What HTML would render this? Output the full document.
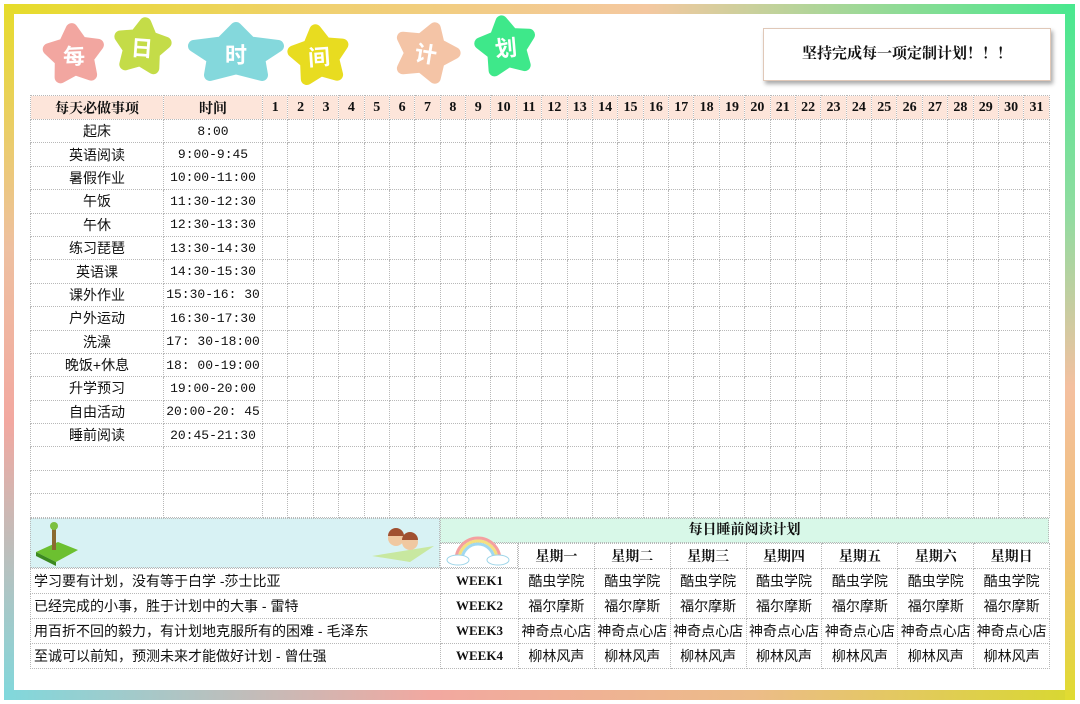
<!DOCTYPE html>
<html><head><meta charset="utf-8"><style>
*{margin:0;padding:0;box-sizing:border-box}
body{width:1080px;height:704px;background:#fff;position:relative;overflow:hidden;font-family:"Liberation Sans","Noto Sans CJK SC",sans-serif;font-size:13px;color:#111}
.s{position:absolute}
table{border-collapse:collapse;table-layout:fixed;position:absolute}
td{border:1px dotted #b8b8b8;text-align:center;white-space:nowrap;overflow:hidden;padding:0}
.b{font-weight:bold;font-family:"Liberation Serif","Noto Serif CJK SC",serif}
.m{font-family:"Liberation Mono","Noto Sans CJK SC",monospace}
.h td{background:#fde5da;font-weight:bold;font-family:"Liberation Serif","Noto Serif CJK SC",serif;font-size:14px}
</style></head><body>
<div class="s" style="left:4px;top:4px;width:1071px;height:10px;background:linear-gradient(90deg,#e6dc2a,#f0d070 30%,#f4c8a0 60%,#48e88e)"></div>
<div class="s" style="left:4px;top:4px;width:10px;height:696px;background:linear-gradient(180deg,#e6dc2a,#eec0a0 35%,#f2a8a0 60%,#80d8dc)"></div>
<div class="s" style="left:4px;top:690px;width:1071px;height:10px;background:linear-gradient(90deg,#80d8dc,#f2a8a0 40%,#ecbc88 70%,#d8d830)"></div>
<div class="s" style="left:1065px;top:4px;width:10px;height:696px;background:linear-gradient(180deg,#48e88e,#90dca0 30%,#f4c0a0 55%,#f0c070 80%,#e0dc30)"></div>

<svg class="s" id="stars" style="left:0;top:0" width="560" height="95" viewBox="0 0 560 95"></svg>

<div class="s b" style="left:763px;top:28px;width:288px;height:53px;background:#fff;border:1px solid #e0c8b8;box-shadow:2px 3px 4px #aaa;font-size:15px;line-height:51px;text-align:center">坚持完成每一项定制计划！！！</div>

<table style="left:30px;top:95px;width:1019px">
<colgroup><col style="width:133px"><col style="width:99px"><col span="31" style="width:25.39px"></colgroup>
<tr class="h" style="height:24px"><td>每天必做事项</td><td>时间</td><td>1</td><td>2</td><td>3</td><td>4</td><td>5</td><td>6</td><td>7</td><td>8</td><td>9</td><td>10</td><td>11</td><td>12</td><td>13</td><td>14</td><td>15</td><td>16</td><td>17</td><td>18</td><td>19</td><td>20</td><td>21</td><td>22</td><td>23</td><td>24</td><td>25</td><td>26</td><td>27</td><td>28</td><td>29</td><td>30</td><td>31</td></tr>
<tbody id="tb"></tbody>
</table>

<div class="s" style="left:30px;top:518px;width:410px;height:50px;background:#d8f2f4;border:1px dotted #b8b8b8"></div>
<svg class="s" style="left:32px;top:520px" width="50" height="46"><polygon points="4,32 26,22 46,30 24,42" fill="#6cc030"/><polygon points="4,32 24,42 24,46 4,36" fill="#3c8a20"/><rect x="20" y="6" width="4" height="24" fill="#8a6a30"/><circle cx="22" cy="6" r="4" fill="#7cc040"/></svg>
<svg class="s" style="left:370px;top:526px" width="66" height="38"><polygon points="2,30 64,20 40,36" fill="#c8e8a0"/><circle cx="26" cy="12" r="8" fill="#f0c8a0"/><circle cx="40" cy="16" r="8" fill="#f0c8a0"/><path d="M18,10a8,8 0 0 1 16,0z" fill="#a05030"/><path d="M32,14a8,8 0 0 1 16,0z" fill="#a05030"/></svg>
<div class="s b" style="left:440px;top:518px;width:609px;height:25px;background:#d8f8e8;border:1px dotted #b8b8b8;text-align:center;line-height:24px;font-size:14px">每日睡前阅读计划</div>
<div class="s" style="left:440px;top:543px;width:78px;height:25px;border:1px dotted #b8b8b8"></div>
<svg class="s" style="left:444px;top:532px" width="66" height="34"><path d="M12,28a22,22 0 0 1 44,0" fill="none" stroke="#f4a0a0" stroke-width="3"/><path d="M15,28a19,19 0 0 1 38,0" fill="none" stroke="#f4e080" stroke-width="3"/><path d="M18,28a16,16 0 0 1 32,0" fill="none" stroke="#a0d8f0" stroke-width="3"/><ellipse cx="14" cy="28" rx="11" ry="5" fill="#fff" stroke="#9cd4e8"/><ellipse cx="54" cy="28" rx="11" ry="5" fill="#fff" stroke="#9cd4e8"/></svg>
<table style="left:518px;top:543px;width:531px"><colgroup><col span="7" style="width:75.86px"></colgroup>
<tr style="height:25px" class="b"><td style="font-size:14px">星期一</td><td style="font-size:14px">星期二</td><td style="font-size:14px">星期三</td><td style="font-size:14px">星期四</td><td style="font-size:14px">星期五</td><td style="font-size:14px">星期六</td><td style="font-size:14px">星期日</td></tr></table>
<table style="left:30px;top:568px;width:1019px" id="bt"><colgroup><col style="width:410px"><col style="width:78px"><col span="7" style="width:75.86px"></colgroup></table>
<script>
var st=[[74,55,26,1,-5,"#f2a6a0","每"],[142,47,24,1,8,"#c4dc48","日"],[236,54,26,1.7,0,"#84d8dc","时"],[319,56,26,1,-8,"#e8dc20","间"],[426,53,26,1.1,18,"#f4c4a6","计"],[506,47,26,1,-10,"#3ee88a","划"]];
var s="";st.forEach(function(a){var p=[];for(var k=0;k<10;k++){var r=k%2?a[2]*0.55:a[2];var an=(-90+k*36+a[4])*Math.PI/180;p.push((a[0]+Math.cos(an)*r*a[3]).toFixed(1)+","+(a[1]+Math.sin(an)*r).toFixed(1));}
s+='<polygon points="'+p.join(" ")+'" fill="'+a[5]+'" stroke="'+a[5]+'" stroke-width="12" stroke-linejoin="round"/>';
s+='<text x="'+a[0]+'" y="'+(a[1]+9)+'" fill="#fff" font-size="22" font-weight="bold" text-anchor="middle" font-family="Noto Sans CJK SC,sans-serif" transform="rotate('+(a[4]/2)+' '+a[0]+' '+a[1]+')">'+a[6]+'</text>';});
document.getElementById("stars").innerHTML=s;
var it=[["起床","8:00"],["英语阅读","9:00-9:45"],["暑假作业","10:00-11:00"],["午饭","11:30-12:30"],["午休","12:30-13:30"],["练习琵琶","13:30-14:30"],["英语课","14:30-15:30"],["课外作业","15:30-16: 30"],["户外运动","16:30-17:30"],["洗澡","17: 30-18:00"],["晚饭+休息","18: 00-19:00"],["升学预习","19:00-20:00"],["自由活动","20:00-20: 45"],["睡前阅读","20:45-21:30"],["",""],["",""],["",""]];
var h="";it.forEach(function(r){h+='<tr style="height:23.4px"><td style="font-size:14px">'+r[0]+'</td><td class="m">'+r[1]+'</td>'+'<td></td>'.repeat(31)+'</tr>'});
document.getElementById("tb").innerHTML=h;
var q=["学习要有计划，没有等于白学 -莎士比亚","已经完成的小事，胜于计划中的大事 - 雷特","用百折不回的毅力，有计划地克服所有的困难 - 毛泽东","至诚可以前知，预测未来才能做好计划 - 曾仕强"];
var bk=["酷虫学院","福尔摩斯","神奇点心店","柳林风声"];var g="";
for(var i=0;i<4;i++){g+='<tr style="height:25px"><td style="text-align:left;padding-left:3px;font-size:14px">'+q[i]+'</td><td class="b" style="font-size:13px">WEEK'+(i+1)+'</td>'+('<td style="font-size:14px">'+bk[i]+'</td>').repeat(7)+'</tr>'}
document.getElementById("bt").innerHTML+=g;
</script>
</body></html>
